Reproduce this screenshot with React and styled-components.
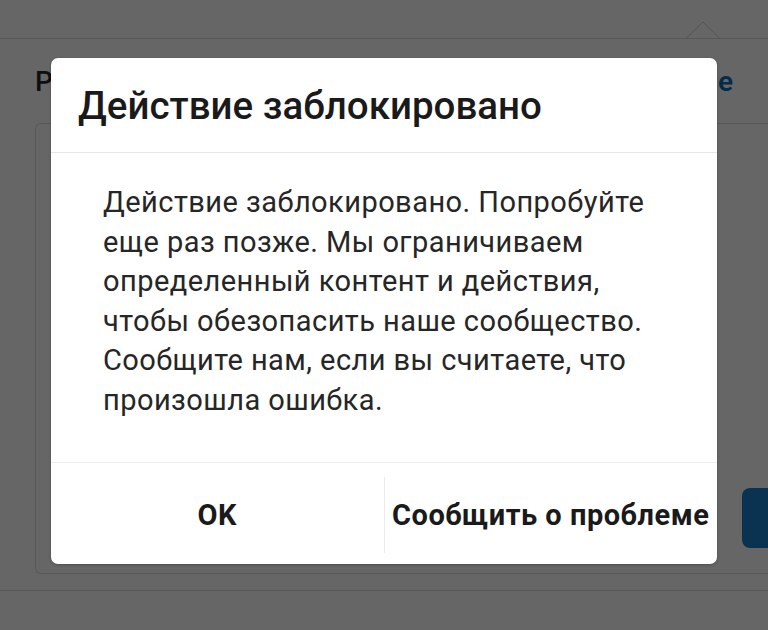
import React from "react";
import styled, { createGlobalStyle } from "styled-components";

const Global = createGlobalStyle`
  html, body { margin: 0; padding: 0; }
  body {
    width: 768px;
    height: 630px;
    overflow: hidden;
    background: #ffffff;
    font-family: Roboto, "Noto Sans", "Liberation Sans", sans-serif;
  }
`;

const Page = styled.div`
  position: relative;
  width: 768px;
  height: 630px;
  background: #ffffff;
  display: flex;
  flex-direction: column;
`;

const TopBar = styled.div`
  position: relative;
  height: 38px;
  border-bottom: 1px solid #dcdcdc;
  flex-shrink: 0;
`;

const Caret = styled.svg`
  position: absolute;
  left: 686px;
  top: 20px;
`;

const HeadRow = styled.div`
  height: 84px;
  display: flex;
  align-items: center;
  justify-content: space-between;
  padding: 0 35px 0 35px;
  flex-shrink: 0;
  font-size: 28px;
  font-weight: 500;
`;

const HeadTitle = styled.span`
  color: #262626;
`;

const HeadLink = styled.span`
  color: #0b6fb8;
  font-weight: 600;
`;

const Card = styled.div`
  margin-left: 35px;
  height: 451px;
  border: 1px solid #dcdcdc;
  border-right: none;
  border-radius: 6px 0 0 6px;
  display: flex;
  justify-content: flex-end;
  box-sizing: border-box;
  flex-shrink: 0;
`;

const BlueButton = styled.div`
  width: 26px;
  height: 60px;
  background: #1a7fcc;
  border-radius: 8px 0 0 8px;
  margin-top: 364px;
`;

const BottomLine = styled.div`
  margin-top: 16px;
  border-top: 1px solid #dcdcdc;
  flex: 1;
`;

const Overlay = styled.div`
  position: absolute;
  inset: 0;
  background: rgba(0, 0, 0, 0.6);
`;

const Dialog = styled.div`
  position: absolute;
  left: 51px;
  top: 58px;
  width: 666px;
  height: 506px;
  background: #ffffff;
  border-radius: 7px;
  display: flex;
  flex-direction: column;
  overflow: hidden;
  box-shadow: 0 1px 3px rgba(0, 0, 0, 0.25);
`;

const DialogHeader = styled.div`
  height: 95px;
  flex-shrink: 0;
  display: flex;
  align-items: center;
  padding: 0 27px;
  box-sizing: border-box;
  border-bottom: 1px solid #e6e6e6;
`;

const DialogTitle = styled.h1`
  margin: 0;
  font-size: 38.5px;
  font-weight: 500;
  color: #1a1a1a;
  letter-spacing: 0;
`;

const DialogBody = styled.div`
  flex: 1;
  padding: 30px 52px 0 52px;
  box-sizing: border-box;
  border-bottom: 1px solid #ececec;
`;

const Message = styled.p`
  margin: 0;
  font-size: 29px;
  line-height: 39.5px;
  letter-spacing: 0.45px;
  color: #262626;
  white-space: nowrap;
`;

const Footer = styled.div`
  height: 101px;
  flex-shrink: 0;
  display: flex;
  align-items: center;
`;

const ActionButton = styled.button`
  flex: 1;
  height: 76px;
  background: none;
  border: none;
  padding: 0;
  margin: 0;
  font-family: Roboto, "Noto Sans", "Liberation Sans", sans-serif;
  font-size: 29px;
  font-weight: 700;
  color: #1a1a1a;
  letter-spacing: 0.5px;
  white-space: nowrap;
  border-left: ${(p) => (p.$divider ? "1px solid #ececec" : "none")};
  margin-top: 3px;
`;

export default function App() {
  return (
    <>
      <Global />
      <Page>
        <TopBar>
          <Caret width="34" height="19" viewBox="0 0 34 19">
            <polyline points="0,18.5 17,2 34,18.5" fill="none" stroke="#d0d0d0" strokeWidth="1" />
          </Caret>
        </TopBar>
        <HeadRow>
          <HeadTitle>P</HeadTitle>
          <HeadLink>e</HeadLink>
        </HeadRow>
        <Card>
          <BlueButton />
        </Card>
        <BottomLine />
        <Overlay />
        <Dialog role="dialog">
          <DialogHeader>
            <DialogTitle>Действие заблокировано</DialogTitle>
          </DialogHeader>
          <DialogBody>
            <Message>
              Действие заблокировано. Попробуйте
              <br />
              еще раз позже. Мы ограничиваем
              <br />
              определенный контент и действия,
              <br />
              чтобы обезопасить наше сообщество.
              <br />
              Сообщите нам, если вы считаете, что
              <br />
              произошла ошибка.
            </Message>
          </DialogBody>
          <Footer>
            <ActionButton>OK</ActionButton>
            <ActionButton $divider>Сообщить о проблеме</ActionButton>
          </Footer>
        </Dialog>
      </Page>
    </>
  );
}
